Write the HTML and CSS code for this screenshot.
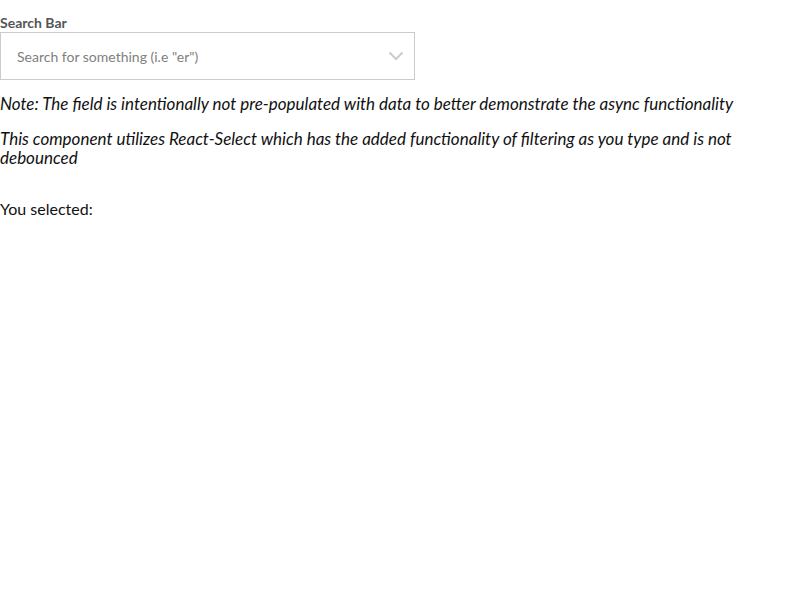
FILE: index.html
```html
<!DOCTYPE html>
<html>
<head>
<meta charset="utf-8">
<link rel="stylesheet" href="styles.css">
</head>
<body>
<div class="page">
  <div class="field">
    <label class="label">Search Bar</label>
    <div class="control">
      <span class="placeholder">Search for something (i.e "er")</span>
      <svg class="chevron" width="16" height="10" viewBox="0 0 16 10"><path d="M1.5 1.5 L8 8 L14.5 1.5" fill="none" stroke="#ccc" stroke-width="2"/></svg>
    </div>
  </div>
  <p class="note">Note: The field is intentionally not pre-populated with data to better demonstrate the async functionality</p>
  <p class="note">This component utilizes React-Select which has the added functionality of filtering as you type and is not debounced</p>
  <p class="selected">You selected:</p>
</div>
</body>
</html>
```
FILE: styles.css
```css
html, body { margin: 0; padding: 0; background: #fff; }
body { font-family: Lato, "Open Sans", sans-serif; color: #111; }
.page { padding-top: 14px; }
.field { width: 415px; }
.label { display: block; font-size: 14px; font-weight: bold; color: #555; line-height: 17px; margin-bottom: 1px; }
.control { box-sizing: border-box; height: 48px; border: 1px solid #ccc; display: flex; align-items: center; justify-content: space-between; padding: 0 10px 0 16px; }
.placeholder { font-size: 14px; color: #808080; }
.chevron { display: block; }
.note { font-style: italic; font-size: 17px; line-height: 19px; margin: 14px 0 0; }
.note + .note { margin-top: 16px; }
.selected { font-size: 16px; line-height: 19px; margin: 32px 0 0; }
```
